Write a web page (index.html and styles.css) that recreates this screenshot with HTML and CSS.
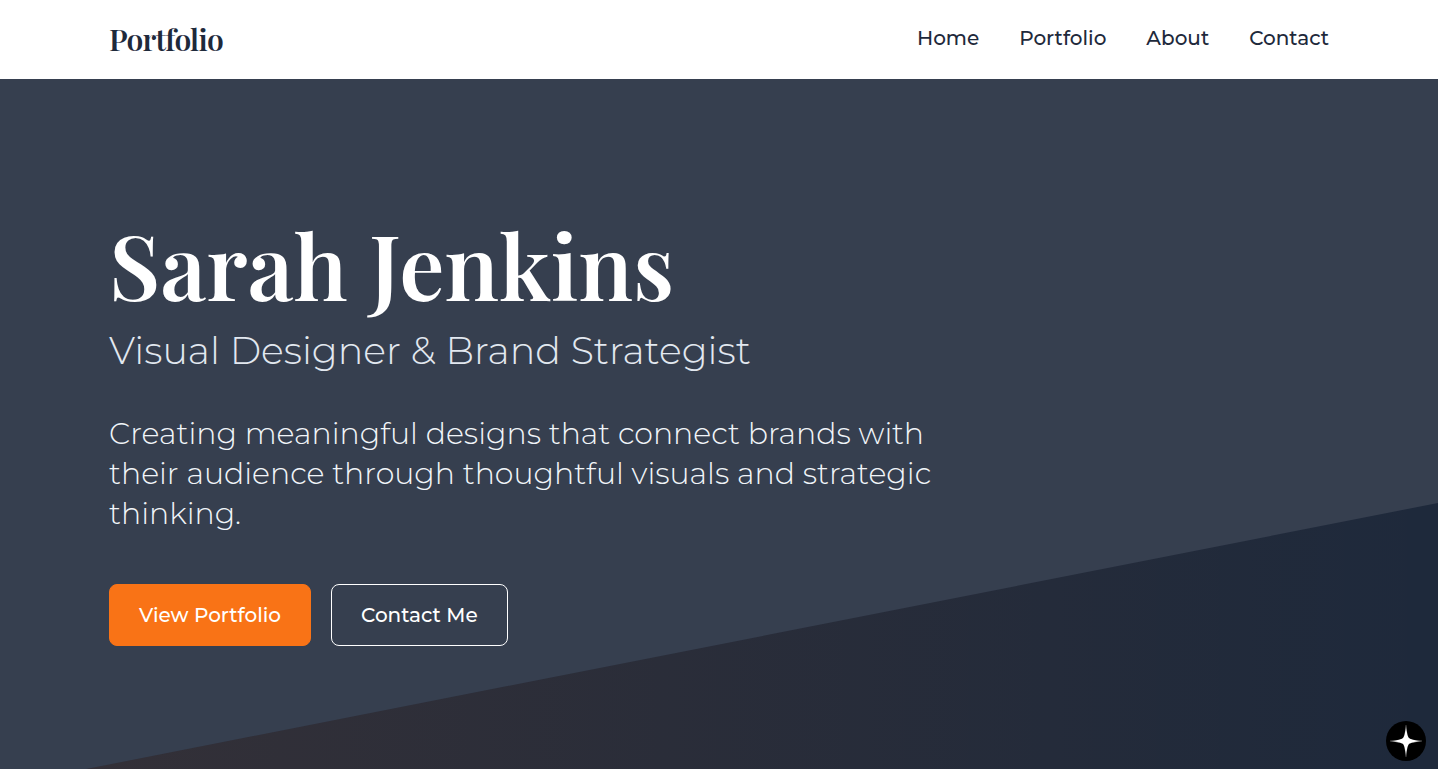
FILE: index.html
```html
<!DOCTYPE html>
<html lang="en">
<head>
    <meta charset="UTF-8">
    <meta name="viewport" content="width=device-width, initial-scale=1.0">
    <title>Sarah Jenkins - Portfolio</title>
    <link rel="stylesheet" href="styles.css">
</head>
<body>
    <header class="site-header">
        <div class="container header-inner">
            <a href="#home" class="logo">Portfolio</a>
            <nav class="main-nav">
                <a href="#home">Home</a>
                <a href="#portfolio">Portfolio</a>
                <a href="#about">About</a>
                <a href="#contact">Contact</a>
            </nav>
        </div>
    </header>

    <main class="hero" id="home">
        <div class="container">
            <div class="hero-content">
                <h1>Sarah Jenkins</h1>
                <h2>Visual Designer &amp; Brand Strategist</h2>
                <p>Creating meaningful designs that connect brands with their audience through thoughtful visuals and strategic thinking.</p>
                <div class="hero-buttons">
                    <button type="button" class="btn primary">View Portfolio</button>
                    <button type="button" class="btn outline">Contact Me</button>
                </div>
            </div>
        </div>
    </main>

    <button type="button" class="spark" aria-label="Open assistant">
        <svg viewBox="0 0 40 40" aria-hidden="true">
            <defs>
                <radialGradient id="glow" gradientUnits="userSpaceOnUse" cx="20" cy="20" r="16">
                    <stop offset="0.5" stop-color="#fff"/>
                    <stop offset="1" stop-color="#fff" stop-opacity="0.3"/>
                </radialGradient>
            </defs>
            <path fill="url(#glow)" d="M19.600 4H20.400C20.900 12.500 21.500 15 23 17C25 18.500 27.500 19.100 36 19.600V20.400C27.500 20.900 25 21.500 23 23C21.500 25 20.900 27.500 20.400 36H19.600C19.100 27.500 18.500 25 17 23C15 21.500 12.500 20.900 4 20.400V19.600C12.500 19.100 15 18.500 17 17C18.500 15 19.100 12.500 19.600 4Z"/>
        </svg>
    </button>
</body>
</html>
```
FILE: styles.css
```css
* {
    box-sizing: border-box;
}

body {
    font-family: Montserrat, Inter, "Open Sans", sans-serif;
    display: flex;
    flex-direction: column;
    min-height: 100vh;
    margin: 0;
    color: #1e293b;
}

.container {
    width: 100%;
    max-width: 1280px;
    margin: 0 auto;
    padding: 0 30px;
}

.site-header {
    background: white;
    padding: 20px 0;
}

.header-inner {
    display: flex;
    justify-content: space-between;
    align-items: center;
}

.logo {
    font-family: "Playfair Display", "Liberation Serif", serif;
    font-size: 30px;
    line-height: 39px;
    font-weight: 600;
    letter-spacing: -0.025em;
    color: #1e293b;
    text-decoration: none;
}

.main-nav {
    display: flex;
    gap: 40px;
    padding-bottom: 4px;
}

.main-nav a {
    font-size: 20px;
    line-height: 30px;
    font-weight: 500;
    color: #1e293b;
    text-decoration: none;
}

.hero {
    position: relative;
    flex: 1;
    display: flex;
    align-items: center;
    padding: 132px 0 120px;
    background: #363f4f;
    color: white;
}

/* slanted panel along the bottom */
.hero::before {
    content: "";
    position: absolute;
    left: 0;
    right: 0;
    bottom: 0;
    height: 266px;
    background: linear-gradient(to right, rgba(249, 115, 22, 0.1), transparent), #1e293b;
    clip-path: polygon(100% 0, 100% 100%, 6% 100%);
}

.hero-content {
    position: relative;
    max-width: 840px;
}

h1 {
    font-family: "Playfair Display", "Liberation Serif", serif;
    font-size: 90px;
    line-height: 100px;
    font-weight: 600;
    margin: 0 0 12px;
}

h2 {
    font-size: 38px;
    line-height: 50px;
    font-weight: 300;
    margin: 0 0 38px;
    color: #e2e8f0;
}

.hero p {
    font-size: 30px;
    line-height: 40px;
    font-weight: 300;
    margin: 0 0 50px;
    color: #f1f5f9;
}

.hero-buttons {
    display: flex;
    gap: 20px;
}

.btn {
    font-family: inherit;
    font-size: 20px;
    line-height: 30px;
    font-weight: 500;
    padding: 15px 29px;
    border: 1px solid white;
    border-radius: 8px;
    background: transparent;
    color: white;
    cursor: pointer;
}

.btn.primary {
    background: #f97316;
    border-color: #f97316;
}

.spark {
    position: fixed;
    right: 12px;
    bottom: 8px;
    width: 40px;
    height: 40px;
    padding: 0;
    border: none;
    border-radius: 50%;
    background: black;
    cursor: pointer;
}

.spark svg {
    display: block;
}
```
